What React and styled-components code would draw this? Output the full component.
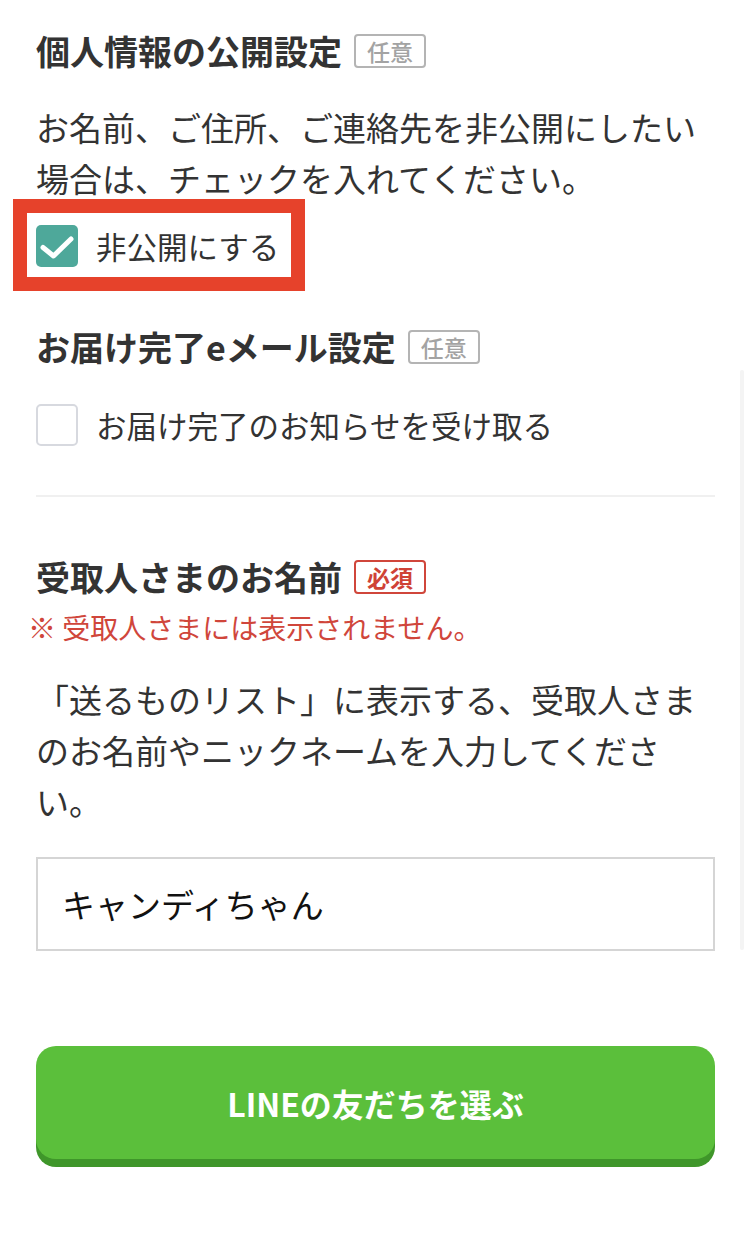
import React from 'react';
import styled, { createGlobalStyle } from 'styled-components';

const GlobalStyle = createGlobalStyle`
  html, body { margin: 0; padding: 0; background: #fff; }
  body {
    font-family: "Noto Sans CJK JP", "Noto Sans", sans-serif;
    color: #333;
  }
  * { box-sizing: border-box; }
`;

const Page = styled.main`
  position: relative;
  width: 750px;
  min-height: 1240px;
  padding: 27px 35px 60px 36px;
`;

const Section = styled.section`
  margin-top: ${(p) => p.$top || 0}px;
`;

const Heading = styled.h2`
  display: flex;
  align-items: center;
  gap: 12px;
  margin: 0;
  font-size: 34px;
  font-weight: 700;
  line-height: 48px;
  color: #333;
`;

const Badge = styled.span`
  display: inline-flex;
  align-items: center;
  height: 34px;
  padding: 0 11px;
  border: 2px solid ${(p) => (p.$required ? '#d0463b' : '#b4b4b4')};
  border-radius: 4px;
  font-size: 23px;
  line-height: 30px;
  font-weight: ${(p) => (p.$required ? 700 : 500)};
  color: ${(p) => (p.$required ? '#cf4236' : '#a3a3a3')};
`;

const Paragraph = styled.p`
  margin: ${(p) => p.$top || 0}px 0 0;
  font-size: 33px;
  line-height: 51px;
  color: #333;
`;

const Note = styled.p`
  margin: 6px 0 0 -8px;
  font-size: 28px;
  line-height: 40px;
  color: #d0463b;
`;

const CheckRow = styled.label`
  position: relative;
  display: flex;
  align-items: center;
  gap: 18px;
  width: fit-content;
  margin-top: ${(p) => p.$top || 0}px;
  font-size: 30.5px;
  line-height: 42px;
  color: #333;
`;

const Box = styled.span`
  flex: none;
  display: flex;
  align-items: center;
  justify-content: center;
  width: 42px;
  height: 42px;
  border-radius: 5px;
  background: ${(p) => (p.$checked ? '#4ea89a' : '#fff')};
  border: ${(p) => (p.$checked ? 'none' : '2px solid #d7d9df')};
`;

const Highlight = styled.span`
  position: absolute;
  top: -26px;
  left: -23px;
  right: -26px;
  bottom: -24px;
  border: 14px solid #e6422b;
  pointer-events: none;
`;

const Divider = styled.hr`
  margin: 49px 0 0;
  border: 0;
  height: 2px;
  background: #f0f0f0;
`;

const NameInput = styled.input`
  display: block;
  width: 100%;
  height: 94px;
  margin-top: 30px;
  padding: 0 24px;
  border: 2px solid #d5d5d5;
  border-radius: 0;
  background: #fff;
  font-family: inherit;
  font-size: 33px;
  color: #111;
  outline: none;
`;

const LineButton = styled.button`
  display: block;
  width: 100%;
  height: 113px;
  margin-top: 95px;
  border: none;
  border-radius: 20px;
  background: #5bbf3b;
  box-shadow: 0 8px 0 #3f962a;
  color: #fff;
  font-family: inherit;
  font-size: 32px;
  font-weight: 700;
  letter-spacing: 0;
  cursor: pointer;
`;

const ScrollTrack = styled.div`
  position: absolute;
  top: 370px;
  left: 740px;
  width: 4px;
  height: 580px;
  background: #f4f4f4;
  border-radius: 2px;
`;

function Check() {
  return (
    <svg width="42" height="42" viewBox="0 0 42 42" aria-hidden="true">
      <path
        d="M7 22.5 L17.5 31 L35 14"
        fill="none"
        stroke="#fff"
        strokeWidth="5"
        strokeLinecap="round"
        strokeLinejoin="round"
      />
    </svg>
  );
}

export default function App() {
  return (
    <>
      <GlobalStyle />
      <Page>
        <ScrollTrack />
        <Section>
          <Heading>
            個人情報の公開設定<Badge>任意</Badge>
          </Heading>
          <Paragraph $top={27}>
            お名前、ご住所、ご連絡先を非公開にしたい場合は、チェックを入れてください。
          </Paragraph>
          <CheckRow $top={21}>
            <Box $checked>
              <Check />
            </Box>
            非公開にする
            <Highlight />
          </CheckRow>
        </Section>

        <Section $top={56}>
          <Heading>
            お届け完了eメール設定<Badge>任意</Badge>
          </Heading>
          <CheckRow $top={33}>
            <Box />
            お届け完了のお知らせを受け取る
          </CheckRow>
          <Divider />
        </Section>

        <Section $top={56}>
          <Heading>
            受取人さまのお名前<Badge $required>必須</Badge>
          </Heading>
          <Note>※ 受取人さまには表示されません。</Note>
          <Paragraph $top={27}>
            「送るものリスト」に表示する、受取人さまのお名前やニックネームを入力してください。
          </Paragraph>
          <NameInput defaultValue="キャンディちゃん" aria-label="受取人さまのお名前" />
          <LineButton type="button">LINEの友だちを選ぶ</LineButton>
        </Section>
      </Page>
    </>
  );
}
